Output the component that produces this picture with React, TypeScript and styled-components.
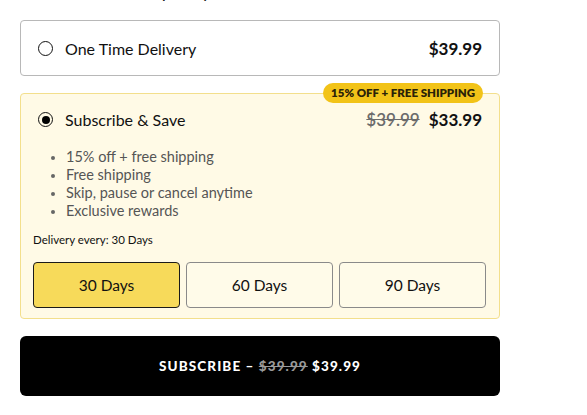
import styled, { createGlobalStyle } from 'styled-components';
import { useState } from 'react';

const GlobalStyle = createGlobalStyle`
  body {
    margin: 0;
    background: #ffffff;
    font-family: "Lato", "Open Sans", sans-serif;
    color: #111;
  }
`;

const Page = styled.div`
  width: 480px;
  padding: 0 0 20px 20px;
`;

const Heading = styled.h3`
  margin: -20px 0 16px;
  padding-left: 40px;
  height: 24px;
  line-height: 24px;
  font-size: 17px;
  font-weight: 500;
  color: #222;
`;

const OptionCard = styled.div<{ $active?: boolean }>`
  position: relative;
  box-sizing: border-box;
  border: 1px solid ${(p) => (p.$active ? '#f3df8c' : '#b8b8b8')};
  background: ${(p) => (p.$active ? '#fffae6' : '#ffffff')};
  border-radius: 4px;
  padding: ${(p) => (p.$active ? '15px 13px 10px 12px' : '0 17px 0 17px')};
  height: ${(p) => (p.$active ? '226px' : '56px')};
  margin-bottom: 17px;
  display: flex;
  flex-direction: column;
  justify-content: ${(p) => (p.$active ? 'flex-start' : 'center')};
`;

const OptionRow = styled.div<{ $indent?: boolean }>`
  display: flex;
  align-items: center;
  justify-content: space-between;
  padding: ${(p) => (p.$indent ? '0 4px 0 5px' : '0')};
  height: 22px;
`;

const Label = styled.div`
  display: flex;
  align-items: center;
  gap: 12px;
  font-size: 16px;
  color: #111;
`;

const Radio = styled.span<{ $checked?: boolean }>`
  box-sizing: border-box;
  width: 15px;
  height: 15px;
  border-radius: 50%;
  border: 1.5px solid #111;
  display: inline-flex;
  align-items: center;
  justify-content: center;
  &::after {
    content: '';
    width: 8px;
    height: 8px;
    border-radius: 50%;
    background: #000;
    display: ${(p) => (p.$checked ? 'block' : 'none')};
  }
`;

const Prices = styled.div`
  display: flex;
  align-items: center;
  gap: 9px;
  font-size: 17px;
  font-weight: 700;
  color: #111;
`;

const OldPrice = styled.span`
  color: #6b6b6b;
  text-decoration: line-through;
  font-weight: 600;
`;

const Badge = styled.div`
  position: absolute;
  top: -11px;
  right: 16px;
  background: #f2c318;
  color: #2a2208;
  font-size: 11.5px;
  font-weight: 800;
  height: 20px;
  line-height: 20px;
  padding: 0 8px;
  border-radius: 10px;
`;

const Perks = styled.ul`
  margin: 18px 0 0;
  padding-left: 33px;
  list-style: disc;
  font-size: 14.5px;
  line-height: 18px;
  color: #555;
  li::marker {
    color: #666;
    font-size: 12px;
  }
`;

const DeliveryNote = styled.div`
  margin-top: 13px;
  font-size: 11.5px;
  color: #111;
  line-height: 14px;
`;

const DayGrid = styled.div`
  margin-top: 15px;
  display: grid;
  grid-template-columns: repeat(3, 1fr);
  gap: 6px;
`;

const DayButton = styled.button<{ $selected?: boolean }>`
  box-sizing: border-box;
  height: 46px;
  border-radius: 4px;
  border: 1px solid ${(p) => (p.$selected ? '#1a1a1a' : '#8a8a8a')};
  background: ${(p) => (p.$selected ? '#f7da5a' : '#fffbe9')};
  font-family: inherit;
  font-size: 15.5px;
  color: #111;
  cursor: pointer;
`;

const SubscribeButton = styled.button`
  width: 100%;
  height: 60px;
  border: none;
  border-radius: 6px;
  background: #000;
  color: #fff;
  font-family: "Lato", sans-serif;
  font-weight: 900;
  font-size: 13.5px;
  letter-spacing: 1.1px;
  text-transform: uppercase;
  cursor: pointer;
  span {
    color: #9a9a9a;
    text-decoration: line-through;
  }
`;

const perks = [
  '15% off + free shipping',
  'Free shipping',
  'Skip, pause or cancel anytime',
  'Exclusive rewards',
];

const days = [30, 60, 90];

export default function App() {
  const [plan, setPlan] = useState<'once' | 'sub'>('sub');
  const [every, setEvery] = useState(30);

  return (
    <Page>
      <GlobalStyle />
      <Heading>Purchase Frequency</Heading>
      <OptionCard onClick={() => setPlan('once')}>
        <OptionRow>
          <Label>
            <Radio $checked={plan === 'once'} />
            One Time Delivery
          </Label>
          <Prices>$39.99</Prices>
        </OptionRow>
      </OptionCard>

      <OptionCard $active onClick={() => setPlan('sub')}>
        <Badge>15% OFF + FREE SHIPPING</Badge>
        <OptionRow $indent>
          <Label>
            <Radio $checked={plan === 'sub'} />
            Subscribe &amp; Save
          </Label>
          <Prices>
            <OldPrice>$39.99</OldPrice>
            $33.99
          </Prices>
        </OptionRow>
        <Perks>
          {perks.map((p) => (
            <li key={p}>{p}</li>
          ))}
        </Perks>
        <DeliveryNote>Delivery every: {every} Days</DeliveryNote>
        <DayGrid>
          {days.map((d) => (
            <DayButton key={d} $selected={every === d} onClick={() => setEvery(d)}>
              {d} Days
            </DayButton>
          ))}
        </DayGrid>
      </OptionCard>

      <SubscribeButton>
        Subscribe – <span>$39.99</span> $39.99
      </SubscribeButton>
    </Page>
  );
}
